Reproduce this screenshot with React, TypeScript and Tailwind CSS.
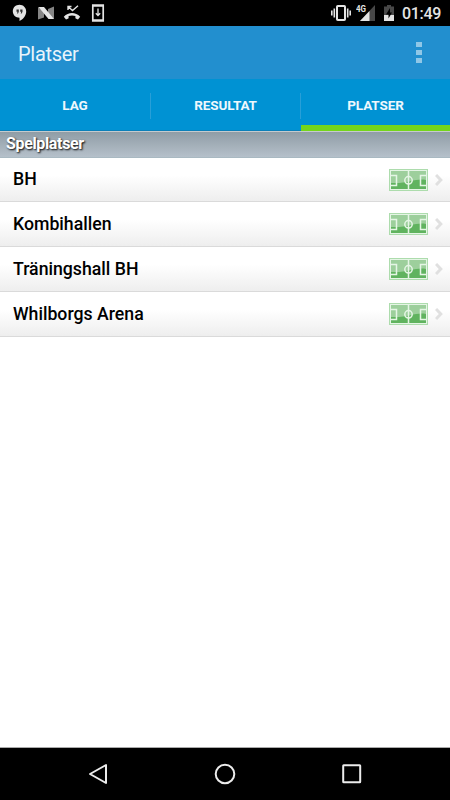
const places = ["BH", "Kombihallen", "Träningshall BH", "Whilborgs Arena"];

const StatusBar = () => {
  return (
    <div className="flex h-[26px] items-center bg-black text-[#e4e4e4]">
      {/* Notifications */}
      <div className="flex flex-1 items-center pl-3">
        <svg width="15" height="18" viewBox="0 0 15 18" className="mr-[10px]">
          <path
            d="M7.500 .8C3.700 .8 .8 3.600 .8 7.300s3 6.500 6.700 6.500V17c3.500-1.800 6.700-5.400 6.700-9.600C14.200 3.700 11.200 .8 7.500 .8z"
            fill="currentColor"
          />
          <path
            d="M4.500 5.500h2.300v2.300l-.8 1.700h-1l.5-1.700h-1zM8.200 5.500h2.300v2.300l-.8 1.700h-1l.5-1.700h-1z"
            fill="#333"
          />
        </svg>
        <svg width="18" height="18" viewBox="0 0 18 18" className="mr-[8px]">
          <path d="M1 3v12.500l6-2V7zM17 2.500l-6 2.500v6l6 4z" fill="#858585" />
          <path d="M1.500 3H7l10 12h-5.500z" fill="currentColor" />
        </svg>
        <svg width="20" height="18" viewBox="0 0 20 18" className="mr-[8px]">
          <path
            d="M5 6V2.500h3.500M5.300 2.800l4.200 3.700 5.500-4.700"
            fill="none"
            stroke="currentColor"
            strokeWidth="1.400"
          />
          <path
            d="M.8 12.800C5.500 7.800 12.500 7.800 17.200 12.800L15 15.500c-.8-.3-1.700-.8-2.600-1.300v-2.300c-2.200-.7-4.600-.7-6.800 0v2.300c-.9.5-1.800 1-2.600 1.300z"
            fill="currentColor"
          />
        </svg>
        <svg width="14" height="18" viewBox="0 0 14 18">
          <path
            d="M1.800 1h10.400v16H1.800zM1.800 2h10.400M1.800 16h10.400"
            fill="none"
            stroke="currentColor"
            strokeWidth="1.700"
          />
          <path
            d="M7 4.500v7M4.800 9.300L7 11.500l2.200-2.200"
            fill="none"
            stroke="currentColor"
            strokeWidth="1.300"
          />
        </svg>
      </div>

      {/* System icons */}
      <div className="flex items-center">
        <svg width="20" height="18" viewBox="0 0 20 18" className="mr-[5px]">
          <rect
            x="6"
            y="2"
            width="8"
            height="14"
            rx="0.800"
            fill="none"
            stroke="currentColor"
            strokeWidth="2"
          />
          <path
            d="M3.300 4.500v9M.8 6.500v5M16.700 4.500v9M19.200 6.500v5"
            stroke="currentColor"
            strokeWidth="1.600"
          />
        </svg>
        <svg width="20" height="18" viewBox="0 0 20 18" className="mr-[8px]">
          <path d="M19 1v16H4z" fill="#484848" />
          <path d="M13.500 7v10H4z" fill="currentColor" />
          <text
            x="0"
            y="8.300"
            fontSize="9"
            fontWeight="700"
            fontFamily="Roboto, sans-serif"
            textLength="10"
            lengthAdjust="spacingAndGlyphs"
            fill="currentColor"
            stroke="#000"
            strokeWidth="1"
            paintOrder="stroke"
          >
            4G
          </text>
        </svg>
        <svg width="10" height="18" viewBox="0 0 10 18" className="mr-[8px]">
          <path d="M3 1h4v1.500h3V17H0V2.500h3z" fill="#484848" />
          <path d="M0 11h10v6H0z" fill="currentColor" />
          <path d="M6 4L2 10.500h2.500V14.500L8 8.500H6z" fill="#000" />
        </svg>
        <span className="mr-[9px] pt-[2px] text-[16px] leading-5 font-medium tracking-[-0.300px]">
          01:49
        </span>
      </div>
    </div>
  );
};

const PitchIcon = () => {
  return (
    <svg width="39" height="22" viewBox="0 0 39 22">
      <rect width="39" height="22" fill="#addcad" />
      <rect x="1" y="1" width="37" height="20" fill="#e5f5e5" />
      <rect x="2" y="2" width="35" height="18" fill="#60b35f" />
      <path d="M2 2h35v9C27 9 19 15 2 14z" fill="#9dcf9c" />
      <g fill="none" stroke="#e5f5e5" strokeWidth="1.500">
        <path d="M19.500 2v18M2 6.500h5.500v10H2M37 6.500h-5.500v10H37" />
        <circle cx="19.500" cy="11.300" r="3.700" />
      </g>
    </svg>
  );
};

const App = () => {
  return (
    <div className="flex h-[800px] w-[450px] flex-col overflow-hidden bg-white font-[Roboto,sans-serif]">
      <StatusBar />

      <header className="flex h-[53px] items-center justify-between bg-[#228fcf] pr-[28px] pl-[18px] text-[#e9f4fb]">
        <h1 className="pt-[2px] text-[20px] leading-6 tracking-[-0.300px]">Platser</h1>
        <div className="flex flex-col gap-[3px]">
          <span className="h-[5px] w-[6px] bg-[#90c7e7]" />
          <span className="h-[5px] w-[6px] bg-[#90c7e7]" />
          <span className="h-[5px] w-[6px] bg-[#90c7e7]" />
        </div>
      </header>

      <nav className="flex h-[52px] bg-[#0092d3] text-[13.500px] font-bold tracking-[-0.100px] text-[#eef8fd]">
        <div className="flex w-[150px] items-center justify-center border-b border-[#0b80b9] pt-[2px]">
          LAG
        </div>
        <div className="flex w-[151px] items-center border-b border-[#0b80b9] pt-[2px]">
          <span className="h-[26px] w-px bg-[#289fd8]" />
          <span className="flex-1 text-center">RESULTAT</span>
          <span className="h-[26px] w-px bg-[#289fd8]" />
        </div>
        <div className="flex flex-1 items-center justify-center border-b-[6px] border-[#74d51b] pt-[7px]">
          PLATSER
        </div>
      </nav>

      <div className="flex h-[27px] items-center border-t border-b border-t-[#c5cbce] border-b-[#a9b9c2] bg-linear-to-b from-[#909da6] to-[#b5c0ca] pb-[2px] pl-[6px]">
        <h2 className="text-[16px] leading-5 font-bold tracking-[-0.350px] text-white [text-shadow:1px_1px_2px_#000]">
          Spelplatser
        </h2>
      </div>

      <ul className="flex-1">
        {places.map((place) => (
          <li
            key={place}
            className="flex h-[45px] items-center border-b border-[#dadada] bg-linear-to-b from-white from-40% to-[#eeeeee] pr-[7px] pl-[13px] first:h-[44px]"
          >
            <span className="flex-1 text-[17.700px] font-medium text-black">
              {place}
            </span>
            <PitchIcon />
            <svg width="8" height="12" viewBox="0 0 8 12" className="ml-[7px]">
              <path
                d="M1 1l4.800 5L1 11"
                fill="none"
                stroke="#e0e0e0"
                strokeWidth="3"
              />
            </svg>
          </li>
        ))}
      </ul>

      {/* Android navigation buttons */}
      <footer className="flex h-[53px] items-center justify-between border-t border-[#aaaaaa] bg-black px-[88px]">
        <svg width="20" height="22" viewBox="0 0 20 22">
          <path
            d="M18 2v18L2 11z"
            fill="none"
            stroke="#ececec"
            strokeWidth="2"
            strokeLinejoin="round"
          />
        </svg>
        <svg width="22" height="22" viewBox="0 0 22 22">
          <circle cx="11" cy="11" r="9.300" fill="none" stroke="#ececec" strokeWidth="2" />
        </svg>
        <svg width="20" height="20" viewBox="0 0 20 20">
          <rect
            x="1.200"
            y="1.200"
            width="17"
            height="17"
            rx="0.500"
            fill="none"
            stroke="#ececec"
            strokeWidth="2"
          />
        </svg>
      </footer>
    </div>
  );
};

export default App;
